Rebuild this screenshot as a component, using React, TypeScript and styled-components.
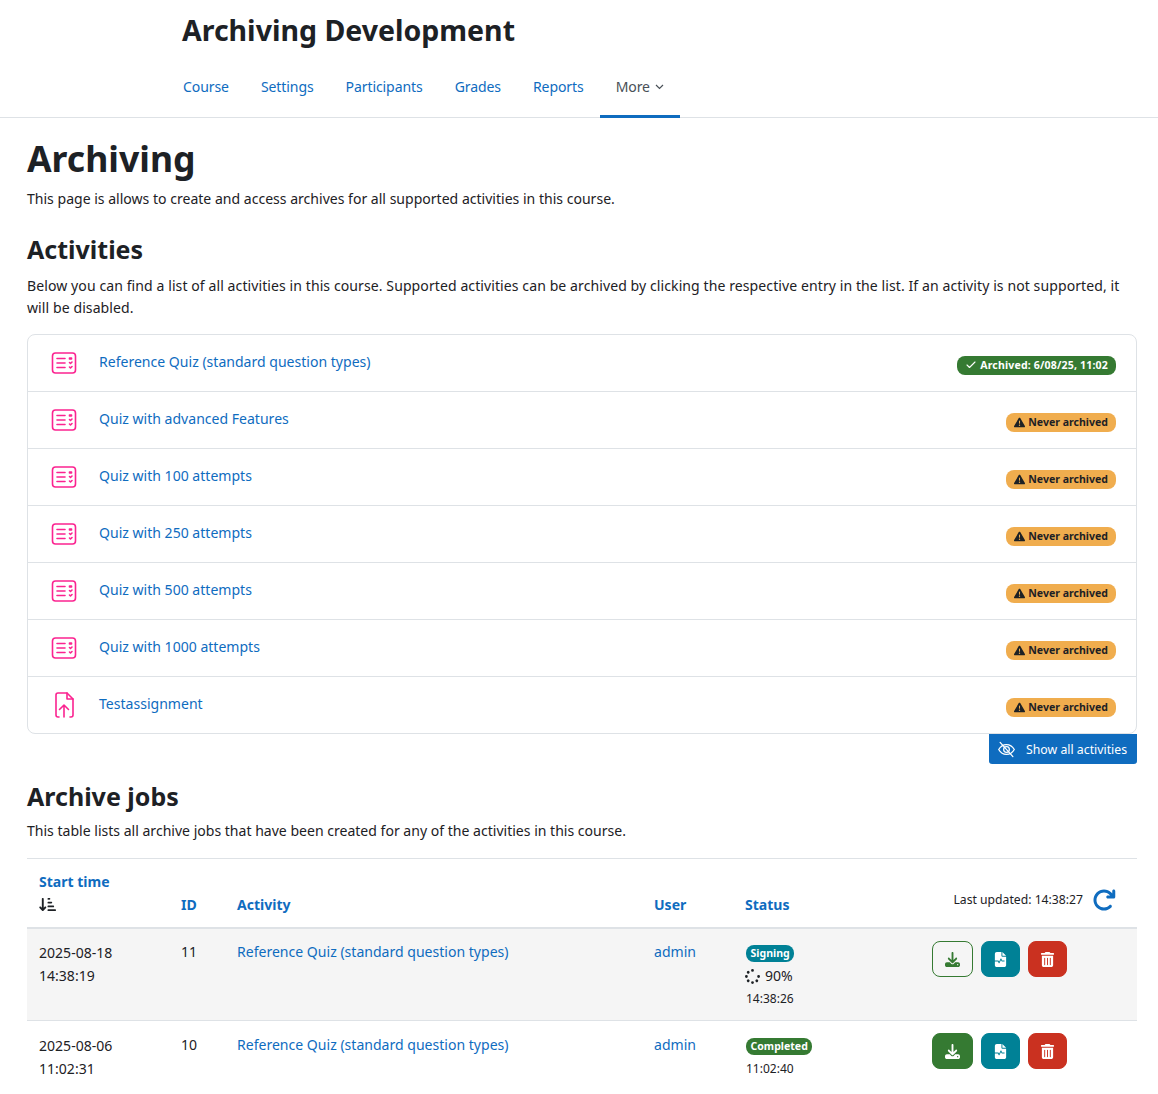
import styled, { createGlobalStyle } from 'styled-components';
import { Check } from 'lucide-react';
import {
  FaArrowDownShortWide,
  FaArrowRotateRight,
  FaDownload,
  FaFileWaveform,
  FaSpinner,
  FaTrashCan,
  FaTriangleExclamation,
} from 'react-icons/fa6';

const c = {
  text: '#1d2125',
  link: '#0f6cbf',
  border: '#dee2e6',
  green: '#357a32',
  teal: '#008196',
  red: '#ca3120',
  orange: '#f0ad4e',
  pink: '#fb2390',
};

const GlobalStyle = createGlobalStyle`
  html, body {
    margin: 0;
    background: #fff;
    color: ${c.text};
    font-family: "Noto Sans", "Liberation Sans", sans-serif;
    font-size: 14.0625px;
    line-height: 22px;
    overflow: hidden;
  }
  a {
    color: ${c.link};
    text-decoration: none;
  }
  * {
    box-sizing: border-box;
  }
`;

const Page = styled.div`
  width: 1158px;
  height: 1094px;
  overflow: hidden;
`;

const Header = styled.header`
  height: 118px;
  border-bottom: 1px solid ${c.border};
  padding: 8px 0 0 182px;
`;

const CourseTitle = styled.div`
  font-size: 28.5px;
  line-height: 44px;
  font-weight: 700;
`;

const Tabs = styled.nav`
  display: flex;
  margin: 6px 0 0 -15px;
`;

const Tab = styled.a<{ $active?: boolean }>`
  display: flex;
  align-items: center;
  gap: 5px;
  height: 60px;
  padding: 1px 16px 0;
  letter-spacing: -0.1px;
  color: ${({ $active }) => ($active ? '#495057' : c.link)};
  border-bottom: 3px solid ${({ $active }) => ($active ? c.link : 'transparent')};
`;

const Main = styled.main`
  padding: 15px 21px 0 27px;
`;

const Heading = styled.h1`
  margin: 0 0 5px;
  font-size: 35.6px;
  line-height: 50px;
  font-weight: 700;
`;

const SectionHeading = styled.h2<{ $after: number }>`
  margin: 0 0 ${({ $after }) => $after}px;
  font-size: 25px;
  line-height: 36px;
  font-weight: 700;
`;

const Paragraph = styled.p<{ $after: number }>`
  margin: 0 0 ${({ $after }) => $after}px;
`;

const WideParagraph = styled(Paragraph)`
  letter-spacing: 0.08px;
`;

const ActivityList = styled.div`
  border: 1px solid ${c.border};
  border-radius: 8px;
`;

const ActivityRow = styled.div`
  display: flex;
  align-items: center;
  height: 57px;
  padding: 0 20px 0 23px;
  border-bottom: 1px solid ${c.border};

  &:last-child {
    height: 56px;
    border-bottom: 0;
  }
`;

const ActivityIcon = styled.svg`
  width: 26px;
  height: 26px;
  flex: none;
  margin-right: 22px;
  fill: none;
  stroke: ${c.pink};
  stroke-width: 1.6;
  stroke-linecap: round;
  stroke-linejoin: round;
`;

const ActivityName = styled.a`
  flex: 1;
  margin-top: -2px;
`;

const Badge = styled.span<{ $bg: string; $fg?: string }>`
  display: inline-flex;
  align-items: center;
  gap: 3px;
  height: 19px;
  padding: 0 8px;
  border-radius: 8px;
  background: ${({ $bg }) => $bg};
  color: ${({ $fg }) => $fg ?? '#fff'};
  font-size: 10.55px;
  line-height: 19px;
  font-weight: 700;
  white-space: nowrap;
`;

const ActivityBadge = styled(Badge)`
  margin-top: 4px;
`;

const ArchivedBadge = styled(ActivityBadge)`
  letter-spacing: 0.17px;
`;

const ShowRow = styled.div`
  display: flex;
  justify-content: flex-end;
  margin-bottom: 14px;
`;

const ShowButton = styled.button`
  display: flex;
  align-items: center;
  gap: 11px;
  width: 148px;
  height: 30px;
  padding: 1px 9px 0;
  border: 0;
  border-radius: 0 0 3px 3px;
  background: ${c.link};
  color: #fff;
  font: inherit;
  font-size: 12.3px;
  white-space: nowrap;
`;

const JobsTable = styled.table`
  width: 1110px;
  border-collapse: collapse;
  table-layout: fixed;
  border-top: 1px solid ${c.border};
`;

const HeadCell = styled.th`
  height: 69px;
  padding: 12px 12px 11px;
  vertical-align: bottom;
  text-align: left;
  color: ${c.link};
  font-weight: 700;
  border-bottom: 2px solid ${c.border};
`;

const SortIcon = styled.div`
  display: flex;
  height: 22px;
  margin-bottom: 1px;
  align-items: center;
  color: ${c.text};
`;

const UpdatedCell = styled.div`
  display: flex;
  justify-content: flex-end;
  align-items: center;
  gap: 9px;
  padding-right: 9px;
  margin-bottom: 4px;
  color: ${c.text};
  font-size: 12.2px;
  font-weight: 400;
`;

const Row = styled.tr<{ $shaded?: boolean }>`
  background: ${({ $shaded }) => ($shaded ? '#f5f5f5' : '#fff')};
  border-bottom: 1px solid ${c.border};

  &:last-child {
    border-bottom: 0;
  }
`;

const Cell = styled.td<{ $top: number }>`
  padding: ${({ $top }) => $top}px 12px 10px;
  vertical-align: top;
`;

const DateText = styled.div`
  line-height: 23px;
`;

const StatusBadge = styled(Badge)`
  display: flex;
  width: fit-content;
  height: 17px;
  line-height: 17px;
  padding: 0 4.5px;
  margin: 4px 0 0 1px;
`;

const Progress = styled.div`
  display: flex;
  align-items: center;
  gap: 5px;
  margin-top: 3px;
`;

const StatusTime = styled.div<{ $gap: number }>`
  font-size: 12px;
  margin: ${({ $gap }) => $gap}px 0 0 1px;
`;

const Actions = styled.div<{ $top: number }>`
  display: flex;
  gap: 8px;
  margin-top: ${({ $top }) => $top}px;
`;

const ActionButton = styled.button<{ $bg: string; $outline?: boolean }>`
  display: grid;
  place-items: center;
  width: ${({ $outline, $bg }) => ($outline || $bg === c.green ? '41px' : '39px')};
  height: 36px;
  padding: 0;
  border-radius: 8px;
  border: 1px solid ${({ $bg }) => $bg};
  background: ${({ $bg, $outline }) => ($outline ? 'transparent' : $bg)};
  color: ${({ $bg, $outline }) => ($outline ? $bg : '#fff')};
  font-size: 15px;
`;

function QuizIcon() {
  return (
    <ActivityIcon viewBox="0 0 26 26">
      <rect x="1.500" y="3" width="23" height="20" rx="3" />
      <path d="M6 8.500h8M6 13h8M6 17.500h8" />
      <path d="M18.500 8h2v1h-2zM18.500 12.500l1 1 1.500-1.500M18.500 17l1 1 1.500-1.500" />
    </ActivityIcon>
  );
}

function AssignIcon() {
  return (
    <ActivityIcon viewBox="0 0 26 26">
      <path d="M8 25H7a2 2 0 0 1-2-2V3a2 2 0 0 1 2-2h9l6 6v16a2 2 0 0 1-2 2h-1" />
      <path d="M16 1v6h6" />
      <path d="M13 25V13M8.500 17.500 13 13l4.500 4.500" />
    </ActivityIcon>
  );
}

function EyeOffIcon() {
  return (
    <svg width="17" height="17" viewBox="0 0 24 24" fill="none" stroke="#fff" strokeWidth="1.8" strokeLinecap="round">
      <path d="M1 12s4-7 11-7 11 7 11 7-4 7-11 7S1 12 1 12Z" />
      <circle cx="12" cy="12" r="4" />
      <path d="M3 2l18 20" />
    </svg>
  );
}

const activities = [
  { name: 'Reference Quiz (standard question types)', archived: true },
  { name: 'Quiz with advanced Features' },
  { name: 'Quiz with 100 attempts' },
  { name: 'Quiz with 250 attempts' },
  { name: 'Quiz with 500 attempts' },
  { name: 'Quiz with 1000 attempts' },
  { name: 'Testassignment', assign: true },
];

function JobActions({ signing }: { signing?: boolean }) {
  return (
    <Actions $top={signing ? 0 : -1}>
      <ActionButton $bg={c.green} $outline={signing}>
        <FaDownload />
      </ActionButton>
      <ActionButton $bg={c.teal}>
        <FaFileWaveform />
      </ActionButton>
      <ActionButton $bg={c.red}>
        <FaTrashCan />
      </ActionButton>
    </Actions>
  );
}

export default function App() {
  return (
    <Page>
      <GlobalStyle />
      <Header>
        <CourseTitle>Archiving Development</CourseTitle>
        <Tabs>
          <Tab href="#">Course</Tab>
          <Tab href="#">Settings</Tab>
          <Tab href="#">Participants</Tab>
          <Tab href="#">Grades</Tab>
          <Tab href="#">Reports</Tab>
          <Tab href="#" $active>
            More
            <svg width="9" height="6" viewBox="0 0 9 6" fill="none" stroke="#495057" strokeWidth="1.2">
              <path d="M1 1l3.500 3.500L8 1" />
            </svg>
          </Tab>
        </Tabs>
      </Header>
      <Main>
        <Heading>Archiving</Heading>
        <Paragraph $after={21}>This page is allows to create and access archives for all supported activities in this course.</Paragraph>
        <SectionHeading $after={8}>Activities</SectionHeading>
        <WideParagraph $after={15}>
          Below you can find a list of all activities in this course. Supported activities can be archived by clicking the respective entry in the list. If an activity is not supported, it will be disabled.
        </WideParagraph>
        <ActivityList>
          {activities.map((a) => (
            <ActivityRow key={a.name}>
              {a.assign ? <AssignIcon /> : <QuizIcon />}
              <ActivityName href="#">{a.name}</ActivityName>
              {a.archived ? (
                <ArchivedBadge $bg={c.green}>
                  <Check size={12} strokeWidth={2.2} />
                  Archived: 6/08/25, 11:02
                </ArchivedBadge>
              ) : (
                <ActivityBadge $bg={c.orange} $fg={c.text}>
                  <FaTriangleExclamation size={11} />
                  Never archived
                </ActivityBadge>
              )}
            </ActivityRow>
          ))}
        </ActivityList>
        <ShowRow>
          <ShowButton>
            <EyeOffIcon />
            Show all activities
          </ShowButton>
        </ShowRow>
        <SectionHeading $after={6}>Archive jobs</SectionHeading>
        <Paragraph $after={16}>This table lists all archive jobs that have been created for any of the activities in this course.</Paragraph>
        <JobsTable>
          <colgroup>
            <col width={142} />
            <col width={56} />
            <col width={417} />
            <col width={91} />
            <col width={187} />
            <col width={217} />
          </colgroup>
          <thead>
            <tr>
              <HeadCell>
                Start time
                <SortIcon>
                  <FaArrowDownShortWide size={17} />
                </SortIcon>
              </HeadCell>
              <HeadCell>ID</HeadCell>
              <HeadCell>Activity</HeadCell>
              <HeadCell>User</HeadCell>
              <HeadCell>Status</HeadCell>
              <HeadCell>
                <UpdatedCell>
                  Last updated: 14:38:27
                  <FaArrowRotateRight size={24} color={c.link} />
                </UpdatedCell>
              </HeadCell>
            </tr>
          </thead>
          <tbody>
            <Row $shaded>
              <Cell $top={12}>
                <DateText>2025-08-18</DateText>
                <DateText>14:38:19</DateText>
              </Cell>
              <Cell $top={12}>11</Cell>
              <Cell $top={12}>
                <a href="#">Reference Quiz (standard question types)</a>
              </Cell>
              <Cell $top={12}>
                <a href="#">admin</a>
              </Cell>
              <Cell $top={12}>
                <StatusBadge $bg={c.teal}>Signing</StatusBadge>
                <Progress>
                  <FaSpinner size={15} />
                  90%
                </Progress>
                <StatusTime $gap={1}>14:38:26</StatusTime>
              </Cell>
              <Cell $top={12}>
                <JobActions signing />
              </Cell>
            </Row>
            <Row>
              <Cell $top={13}>
                <DateText>2025-08-06</DateText>
                <DateText>11:02:31</DateText>
              </Cell>
              <Cell $top={13}>10</Cell>
              <Cell $top={13}>
                <a href="#">Reference Quiz (standard question types)</a>
              </Cell>
              <Cell $top={13}>
                <a href="#">admin</a>
              </Cell>
              <Cell $top={13}>
                <StatusBadge $bg={c.green}>Completed</StatusBadge>
                <StatusTime $gap={3}>11:02:40</StatusTime>
              </Cell>
              <Cell $top={13}>
                <JobActions />
              </Cell>
            </Row>
          </tbody>
        </JobsTable>
      </Main>
    </Page>
  );
}
